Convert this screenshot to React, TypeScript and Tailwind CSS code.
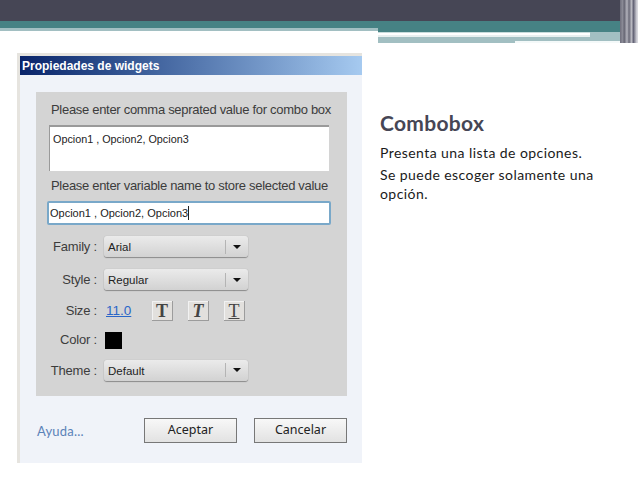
const sans = "font-['Liberation_Sans',Arial,sans-serif]";

function Select({ value, width = "w-[144px]" }: { value: string; width?: string }) {
  return (
    <div className={`${width} h-[21px] flex items-center rounded-[3px] bg-gradient-to-b from-[#ebebeb] to-[#d2d2d2] shadow-[0_1px_1px_#8a8a8a,0_0_1px_#a0a0a0]`}>
      <span className="flex-1 pl-[4px] pt-[2px] text-[11.5px] text-[#222]">{value}</span>
      <span className="w-px h-[14px] bg-[#b4b4b4]" />
      <span className="w-[22px] flex justify-center">
        <svg width="8" height="4" viewBox="0 0 8 4">
          <path d="M0 0h8L4 4z" fill="#111" />
        </svg>
      </span>
    </div>
  );
}

function StyleButton({ className, underline }: { className: string; underline?: boolean }) {
  return (
    <div className="w-[21px] h-[20px] flex items-center justify-center bg-[#e2e0dd] border-r border-b border-[#9c9c9c] shadow-[inset_1px_1px_0_#f2f2f2]">
      <span className={`font-['Liberation_Serif',serif] text-[18px] leading-none text-[#444] ${underline ? "underline" : ""} ${className}`}>T</span>
    </div>
  );
}

function Row({ label, children, className }: { label: string; children: React.ReactNode; className?: string }) {
  return (
    <div className={`flex items-center ${className ?? ""}`}>
      <span className="w-[60px] pr-[7px] text-right text-[13px] tracking-[-0.2px] text-[#3c3c3c] whitespace-nowrap">{label}</span>
      {children}
    </div>
  );
}

function PushButton({ label }: { label: string }) {
  return (
    <div className="w-[93px] h-[25px] flex items-center justify-center border border-[#777] bg-gradient-to-b from-[#f8f8f8] to-[#e2e2e2] font-['Noto_Sans',sans-serif] text-[12.5px] text-[#222]">
      {label}
    </div>
  );
}

export default function App() {
  return (
    <div className="w-[638px] h-[479px] bg-white overflow-hidden">
      {/* header bands */}
      <div className="flex h-[43px]">
        <div className="w-[378px] flex flex-col">
          <div className="h-[21px] bg-[#464655]" />
          <div className="h-[7px] bg-[#468284]" />
          <div className="h-[3px] bg-[#a2bfc2]" />
        </div>
        <div className="flex-1 flex flex-col">
          <div className="h-[21px] bg-[#464655]" />
          <div className="h-[11px] bg-[#468284]" />
          <div className="flex h-[5px]">
            <div className="w-[212px] flex flex-col">
              <div className="h-px bg-[#c8dcdc]" />
              <div className="h-[2px] bg-white" />
              <div className="h-[2px] bg-[#e8f0f0]" />
            </div>
            <div className="flex-1 bg-[#a2bfc2]" />
          </div>
          <div className="flex h-[6px]">
            <div className="w-[137px] bg-[#a2bfc2]" />
            <div className="flex-1 flex flex-col">
              <div className="h-[4px] bg-[#a2bfc2]" />
              <div className="h-[2px] bg-[#f4f9f9]" />
            </div>
          </div>
        </div>
        <div className="w-[18px] bg-[linear-gradient(90deg,#6e6e7c_0,#8f8f9a_3px,#5e5e6c_4px,#b4b4bd_7px,#6a6a78_9px,#c8c8cf_12px,#56566a_13px,#d8d8de_17px)]" />
      </div>

      <div className="flex items-start">
        {/* dialog */}
        <div className={`ml-[17px] mt-[10px] w-[345px] h-[410px] flex flex-col bg-[#f0f3f9] border-l-[3px] border-t-[3px] border-[#e6e4df] ${sans}`}>
          <div className="h-[19px] flex items-center pl-[2px] bg-gradient-to-r from-[#0a246a] to-[#a6caf0] text-[12px] font-bold text-white">
            Propiedades de widgets
          </div>

          <div className="ml-[16px] mt-[17px] w-[311px] h-[304px] bg-[#d4d4d4] pt-[10px]">
            <p className="pl-[15px] text-[13px] tracking-[-0.3px] leading-[16px] text-[#3c3c3c] whitespace-nowrap">Please enter comma seprated value for combo box</p>
            <div className="ml-[13px] mt-[7px] w-[280px] h-[46px] bg-white border-t-2 border-l border-[#9a9a9a] pl-[3px] pt-[5px] text-[10.8px] leading-[14px] text-[#222]">
              Opcion1 , Opcion2, Opcion3
            </div>
            <p className="pl-[15px] mt-[7px] text-[13px] tracking-[-0.3px] leading-[16px] text-[#3c3c3c] whitespace-nowrap">Please enter variable name to store selected value</p>
            <div className="ml-[11px] mt-[7px] w-[284px] h-[24px] flex items-center bg-white rounded-[2px] border-2 border-[#79a8c9] pl-[1px] text-[11px] text-[#222]">
              Opcion1 , Opcion2, Opcion3
              <span className="w-px h-[14px] bg-[#222]" />
            </div>

            <Row label="Family :" className="mt-[11px] ml-[8px]"><Select value="Arial" /></Row>
            <Row label="Style :" className="mt-[12px] ml-[8px]"><Select value="Regular" /></Row>
            <Row label="Size :" className="mt-[11px] ml-[8px]">
              <span className="ml-[2px] w-[46px] text-[13.5px] text-[#2a66c8] underline">11.0</span>
              <div className="flex gap-[15px]">
                <StyleButton className="font-bold" />
                <StyleButton className="font-bold italic" />
                <StyleButton className="" underline />
              </div>
            </Row>
            <Row label="Color :" className="mt-[9px] ml-[8px]">
              <span className="ml-px w-[17px] h-[17px] bg-black" />
            </Row>
            <Row label="Theme :" className="mt-[10px] ml-[8px]"><Select value="Default" /></Row>
          </div>

          <div className="ml-[17px] mt-[22px] w-[310px] flex items-center">
            <span className="flex-1 pt-[2px] font-['Lato',sans-serif] text-[13px] tracking-[0.2px] text-[#5b82b8]">Ayuda...</span>
            <div className="flex gap-[17px]">
              <PushButton label="Aceptar" />
              <PushButton label="Cancelar" />
            </div>
          </div>
        </div>

        {/* text column */}
        <div className="ml-[18px] mt-[67px] w-[240px] font-['Lato',sans-serif]">
          <h1 className="text-[21px] leading-[26px] font-bold tracking-[0.3px] text-[#464655]">Combobox</h1>
          <p className="mt-[7px] text-[14px] leading-[19px] tracking-[0.43px] text-[#1a1a1a]">Presenta una lista de opciones.</p>
          <p className="mt-[3px] text-[14px] leading-[19px] tracking-[0.43px] text-[#1a1a1a]">Se puede escoger solamente una opción.</p>
        </div>
      </div>
    </div>
  );
}
